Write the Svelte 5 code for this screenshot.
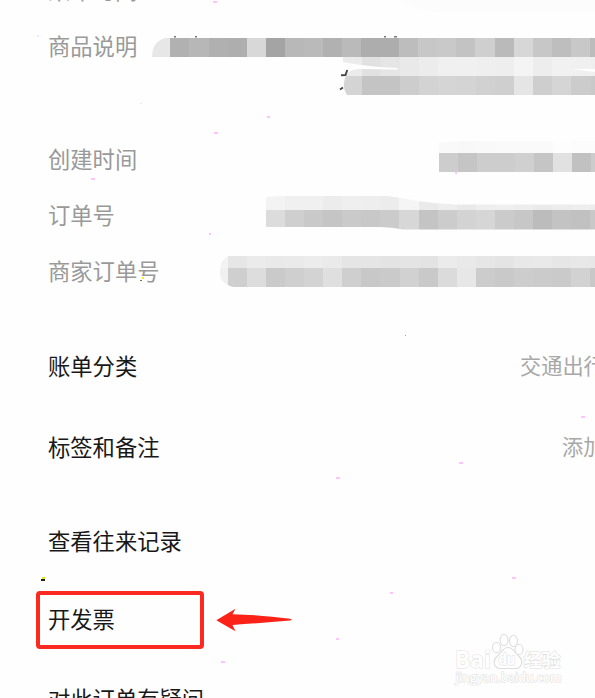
<script>
  const CELL = 19.07

  const infoRows = [
    { label: '乘车时间' },
    { label: '商品说明', tall: true },
    { label: '创建时间' },
    { label: '订单号' },
    { label: '商家订单号' }
  ]

  const settings = [
    { label: '账单分类', value: '交通出行', cls: 'category' },
    { label: '标签和备注', value: '添加', cls: 'tags' }
  ]

  // grey levels of the mosaic cells, one per column
  const strips = [
    { clip: 'a', x: 151.3, y: 37.6, h: 19.4, cells: [231, 177, 183, 176, 174, 216, 164, 184, 186, 177, 186, 173, 173, 189, 199, 201, 195, 207, 186, 215, 199, 190, 200, 188] },
    { clip: 'b', x: 342.6, y: 57, h: 19, cells: [235, 225, 229, 233, 236, 240, 240, 239, 238, 244, 237, 241, 240, 239] },
    { clip: 'b', x: 342.6, y: 76, h: 19, cells: [212, 196, 196, 205, 211, 213, 212, 209, 207, 229, 206, 213, 204, 201] },
    { clip: 'c', x: 438.5, y: 141, h: 12, cells: [249, 248, 249, 250, 250, 250, 253, 252, 252] },
    { clip: 'c', x: 438.5, y: 153, h: 19, cells: [205, 197, 205, 205, 208, 197, 225, 193, 204] },
    { clip: 'd', x: 266, y: 195, h: 15, cells: [243, 240, 240, 236, 239, 238, 236, 245, 234, 238, 233, 238, 239, 237, 235, 236, 238, 236] },
    { clip: 'd', x: 266, y: 210, h: 20, cells: [220, 207, 201, 197, 202, 200, 203, 215, 196, 204, 211, 214, 203, 199, 188, 195, 193, 200] },
    { clip: 'e', x: 208.8, y: 256, h: 12, cells: [243, 230, 235, 233, 234, 236, 234, 229, 229, 227, 228, 227, 235, 233, 230, 228, 232, 233, 230, 232, 231] },
    { clip: 'e', x: 208.8, y: 268, h: 19, cells: [240, 207, 221, 202, 207, 211, 223, 207, 200, 202, 209, 201, 219, 231, 204, 201, 205, 203, 202, 210, 200] }
  ]

  // x, y, width
  const specks = [
    [213, 1, 4], [267, 116, 3], [214, 132, 4], [91, 178, 4],
    [455, 172, 2], [209, 233, 2], [581, 416, 4], [459, 462, 4], [336, 477, 4],
    [512, 577, 4], [390, 592, 3], [221, 661, 4], [336, 638, 3]
  ]
</script>

<main>
  <section class="info">
    {#each infoRows as row}
      <div class="row" class:tall={row.tall}><span>{row.label}</span></div>
    {/each}
  </section>

  <section class="settings">
    {#each settings as item}
      <div class="row">
        <span>{item.label}</span>
        <span class="value {item.cls}">{item.value}</span>
      </div>
    {/each}
  </section>

  <section class="actions">
    <div class="row"><span>查看往来记录</span></div>
    <div class="row invoice">
      <div class="box">开发票</div>
      <svg class="arrow" width="78" height="24" viewBox="0 0 78 24">
        <path d="M0.3 12.2 L19.5 0.8 L16.5 6.2 Q45 7 74 10.7 Q77 11.6 74 12.6 Q45 15 16.5 17 L19.5 23.2 Z" fill="#fb2318" />
      </svg>
    </div>
    <div class="row"><span>对此订单有疑问</span></div>
  </section>

  <svg class="overlay" width="595" height="698" viewBox="0 0 595 698">
    <defs>
      <clipPath id="a"><path d="M152 57 C152 47 157 38 170 37.6 H595 V57 Z" /></clipPath>
      <clipPath id="b"><path d="M343 57 H595 V95 H347 Q341 86 346 76 Q349 69 360 69 L398 69.5 L398 68 Q367 67 343 62 Z" /></clipPath>
      <clipPath id="c"><path d="M438.5 143 Q450 141 465 141 H595 V172 H438.5 Z" /></clipPath>
      <clipPath id="d"><path d="M266 197 L280 196 H388 Q402 198 418 201 Q438 204 456 204.5 H595 V229.5 H403 Q392 227 380 227 H266 Z" /></clipPath>
      <clipPath id="e"><path d="M228 256 H595 V287 H233 Q219 283 220 271 Q220 260 228 256 Z" /></clipPath>
    </defs>
    <path d="M400 0 H595 V12 H440 Q405 8 400 0 Z" fill="#fcfcfc" />
    {#each strips as strip}
      <g clip-path="url(#{strip.clip})" shape-rendering="crispEdges">
        {#each strip.cells as level, i}
          <rect x={strip.x + i * CELL} y={strip.y} width={CELL + 0.3} height={strip.h} fill="rgb({level},{level},{level})" />
        {/each}
      </g>
    {/each}
    <path d="M569 69 H595 V72 Q582 70 569 69 Z" fill="#fff" />
    <path d="M341 75.2 L345.5 75 L347.3 70 M340 89.5 L343 87.5" stroke="#444" stroke-width="1.9" fill="none" />
    <path d="M174 36.8 h2 M195 36.8 h2 M384 36.8 h2 M394 36.8 h3" stroke="#777" stroke-width="1.6" />
    {#each specks as [x, y, w]}
      <rect {x} {y} width={w} height="2" fill="#ffc4ff" />
    {/each}
    <rect x="37" y="35" width="2" height="2" fill="#ffe0f8" />
    <rect x="140" y="103" width="2" height="1" fill="#ffe0f8" />
    <rect x="142" y="277" width="2" height="2" fill="#f5ee20" />
    <rect x="140" y="280" width="2" height="1" fill="#8a6a40" />
    <rect x="42" y="577" width="3" height="2" fill="#d8e830" />
    <rect x="41" y="579" width="4" height="2" fill="#222" />
    <rect x="405" y="335" width="1" height="1" fill="#999" />
  </svg>

  <svg class="watermark" width="120" height="60" viewBox="0 0 120 60">
    <g fill="#fff" stroke="#dedede" stroke-width="1.1">
      <text x="5" y="37.5" class="logo" textLength="36" lengthAdjust="spacingAndGlyphs">Bai</text>
      <ellipse cx="46.5" cy="17.5" rx="4" ry="5.3" />
      <ellipse cx="54" cy="10" rx="4" ry="5.7" />
      <ellipse cx="63.5" cy="11" rx="4" ry="5.7" />
      <ellipse cx="69" cy="19.5" rx="4" ry="5.3" />
      <path d="M58 17.5 C53 17.5 52 22 47.5 26 C42 30.5 43.5 38.5 51 38.5 H65 C72.5 38.5 74 30.5 68.5 26 C64 22 63 17.5 58 17.5 Z" />
      <text x="48.5" y="35" class="du" textLength="17" lengthAdjust="spacingAndGlyphs">du</text>
      <text x="73.5" y="36.5" class="cn">经验</text>
      <text x="5.5" y="52" class="site" textLength="106" lengthAdjust="spacingAndGlyphs">jingyan.baidu.com</text>
    </g>
  </svg>
</main>

<style>
  :global(body) {
    background: #fefefe;
  }

  main {
    position: relative;
    box-sizing: border-box;
    width: 595px;
    height: 698px;
    overflow: hidden;
    font-family: "Noto Sans CJK SC", sans-serif;
    font-size: 22.3px;
    line-height: 30px;
    white-space: nowrap;
    color: #181818;
  }

  section {
    padding-left: 48px;
  }

  .row {
    display: flex;
    align-items: center;
    justify-content: space-between;
    height: 56px;
  }

  .info {
    margin-top: -39px;
    color: #999;
  }

  .info .tall {
    padding-bottom: 57px;
  }

  .settings {
    padding-top: 26px;
  }

  .settings .row {
    height: 81px;
  }

  .value {
    flex: none;
    color: #a8a8a8;
    font-size: 21.2px;
  }

  .category {
    width: 75px;
  }

  .tags {
    width: 33px;
  }

  .actions {
    padding-top: 15px;
  }

  .actions .row {
    height: 78px;
  }

  .actions .invoice {
    justify-content: flex-start;
    gap: 12px;
    margin-left: -12px;
    padding-top: 2px;
  }

  .box {
    box-sizing: border-box;
    width: 168px;
    height: 58px;
    padding: 8px 0 0 8px;
    border: 4px solid #fa2a20;
    border-radius: 4px;
  }

  .overlay {
    position: absolute;
    top: 0;
    left: 0;
  }

  .watermark {
    position: absolute;
    left: 450px;
    top: 630px;
  }

  .watermark text {
    font-family: "Open Sans", sans-serif;
    font-weight: 700;
    paint-order: stroke;
  }

  .watermark .logo {
    font-size: 24px;
  }

  .watermark .du {
    font-size: 16px;
  }

  .watermark .cn {
    font-family: "Noto Sans CJK SC", sans-serif;
    font-size: 18.5px;
  }

  .watermark .site {
    font-size: 12px;
    font-weight: 600;
  }
</style>
